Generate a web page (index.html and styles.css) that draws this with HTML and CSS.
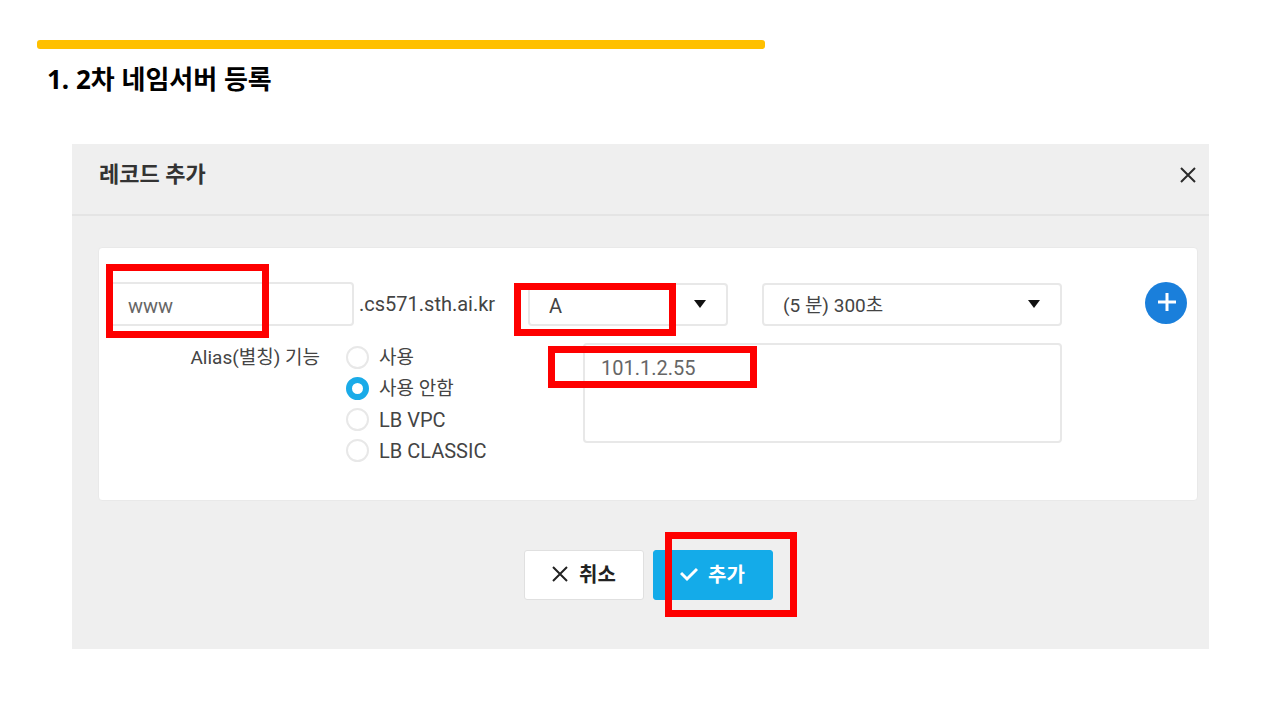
FILE: index.html
```html
<!DOCTYPE html>
<html lang="ko">
<head>
  <meta charset="UTF-8">
  <title>2차 네임서버 등록</title>
  <meta name="viewport" content="width=device-width, initial-scale=1.0">
  <link rel="stylesheet" href="styles.css">
</head>
<body>
  <div class="bar"></div>
  <h1>1. 2차 네임서버 등록</h1>

  <form class="panel">
    <header class="panel-header">
      <h2>레코드 추가</h2>
      <button class="close" type="button" aria-label="닫기">
        <svg width="18" height="18" viewBox="0 0 18 18"><path d="M2 2L16 16M16 2L2 16" fill="none" stroke="#2b2b2b" stroke-width="2"/></svg>
      </button>
    </header>

    <div class="card">
      <div class="left">
        <div class="host">
          <input class="field" type="text" value="www" aria-label="레코드명">
          <span>.cs571.sth.ai.kr</span>
          <div class="mark mark-host"></div>
        </div>
        <fieldset class="alias">
          <legend class="hidden">Alias</legend>
          <span class="alias-title">Alias(별칭) 기능</span>
          <div class="options">
            <label class="ko"><input type="radio" name="alias">사용</label>
            <label class="ko"><input type="radio" name="alias" checked>사용 안함</label>
            <label><input type="radio" name="alias">LB VPC</label>
            <label><input type="radio" name="alias">LB CLASSIC</label>
          </div>
        </fieldset>
      </div>

      <div class="right">
        <div class="selects">
          <div class="select type">
            <select class="field" aria-label="타입"><option>A</option></select>
            <svg class="arrow" width="12" height="8" viewBox="0 0 12 8"><path d="M0 0H12L6 8Z" fill="#111"/></svg>
            <div class="mark mark-type"></div>
          </div>
          <div class="select ttl">
            <select class="field ko" aria-label="TTL"><option>(5 분) 300초</option></select>
            <svg class="arrow" width="12" height="8" viewBox="0 0 12 8"><path d="M0 0H12L6 8Z" fill="#111"/></svg>
          </div>
        </div>
        <div class="value">
          <textarea class="field" aria-label="레코드 값">101.1.2.55</textarea>
          <div class="mark mark-value"></div>
        </div>
      </div>

      <button class="plus" type="button" aria-label="추가">
        <svg width="20" height="20" viewBox="0 0 20 20"><path d="M11 0V18M2 9H20" fill="none" stroke="#fff" stroke-width="3"/></svg>
      </button>
    </div>

    <div class="buttons">
      <button class="button" type="button">
        <svg width="18" height="18" viewBox="0 0 18 18"><path d="M2 2L16 16M16 2L2 16" fill="none" stroke="#222" stroke-width="2"/></svg>
        취소
      </button>
      <div class="add">
        <button class="button primary" type="submit">
          <svg width="18" height="18" viewBox="0 0 18 18"><path d="M1 8L7 14L17 4" fill="none" stroke="#fff" stroke-width="3"/></svg>
          추가
        </button>
        <div class="mark mark-add"></div>
      </div>
    </div>
  </form>
</body>
</html>
```

FILE: styles.css
```css
* {
  box-sizing: border-box;
}

body {
  margin: 0;
  padding: 40px 71px 40px 72px;
  background: white;
  color: #444;
  font-family: Roboto, "Noto Sans CJK KR", sans-serif;
  font-size: 20px;
  line-height: 24px;
}

h1, h2 {
  margin: 0;
  font-weight: bold;
}

.bar {
  width: 64%;
  height: 9px;
  margin-left: -35px;
  border-radius: 3px;
  background: #ffc000;
}

h1 {
  margin: 14px 0 0 -25px;
  color: black;
  font-family: "Noto Sans", "Noto Sans CJK KR", sans-serif;
  font-size: 26px;
  line-height: 32px;
}

button {
  border: none;
  cursor: pointer;
  font-family: inherit;
}

.panel {
  margin-top: 49px;
  padding-bottom: 49px;
  background: #efefef;
}

.panel-header {
  display: flex;
  justify-content: space-between;
  align-items: center;
  height: 72px;
  padding: 0 12px 9px 27px;
  border-bottom: 2px solid #e4e4e4;
}

h2 {
  color: #333;
  font-size: 22px;
}

.close {
  display: flex;
  padding: 0;
  background: none;
}

.card {
  display: flex;
  min-height: 254px;
  margin: 31px 11px 0 26px;
  padding: 34px 10px 34px 9px;
  border: 1px solid #e9e9e9;
  border-radius: 4px;
  background: white;
}

.field {
  display: block;
  width: 100%;
  height: 43px;
  border: 2px solid #e8e8e8;
  border-radius: 4px;
  background: white;
  color: #444;
  font-family: inherit;
  font-size: 20px;
  line-height: 24px;
  outline: none;
}

.left {
  flex: none;
  width: 420px;
}

.host {
  display: flex;
  align-items: center;
  gap: 5px;
  position: relative;
}

.host .field {
  width: 246px;
  height: 44px;
  padding: 4px 18px 0;
  color: #666;
}

.alias {
  display: flex;
  margin: 16px 0 0;
  padding: 0;
  border: none;
}

.hidden {
  display: none;
}

.alias-title {
  width: 212px;
  margin-right: 26px;
  line-height: 31px;
  text-align: right;
  font-size: 19px;
}

.options label {
  display: flex;
  align-items: center;
  height: 31px;
}

.options input {
  appearance: none;
  width: 23px;
  height: 23px;
  margin: 0 10px 0 0;
  border: 2px solid #e8e8e8;
  border-radius: 50%;
  background: white;
}

.options input:checked {
  border: 6px solid #1aabe8;
}

.ko {
  font-size: 19px;
}

.right {
  flex: 1;
  max-width: 534px;
}

.selects {
  display: flex;
  gap: 34px;
  padding-top: 1px;
}

.select {
  position: relative;
}

.type {
  flex: 2;
}

.ttl {
  flex: 3;
}

select.field {
  appearance: none;
  padding: 2px 19px 0;
}

select.ko {
  font-size: 19px;
}

.arrow {
  position: absolute;
  top: 17px;
  right: 22px;
  pointer-events: none;
}

.value {
  position: relative;
  margin: 17px 0 0 55px;
}

textarea.field {
  height: 100px;
  padding: 11px 16px;
  color: #666;
  resize: none;
}

.plus {
  display: flex;
  justify-content: center;
  align-items: center;
  width: 42px;
  height: 42px;
  margin-left: auto;
  border-radius: 50%;
  background: #1a7fdb;
}

.buttons {
  display: flex;
  justify-content: center;
  gap: 9px;
  margin-top: 49px;
  padding-left: 15px;
}

.button {
  display: flex;
  justify-content: center;
  align-items: center;
  gap: 10px;
  width: 120px;
  height: 50px;
  padding-bottom: 4px;
  border: 1px solid #e0e0e0;
  border-radius: 3px;
  background: white;
  color: #222;
  font-size: 20px;
  font-weight: bold;
}

.primary {
  border-color: #14abe9;
  background: #14abe9;
  color: white;
}

.add {
  position: relative;
}

/* red callouts over the form */
.mark {
  position: absolute;
  border: 7px solid #fe0000;
  pointer-events: none;
}

.mark-host {
  top: -18px;
  left: -2px;
  width: 163px;
  height: 74px;
}

.mark-type {
  top: 0;
  left: -14px;
  width: 162px;
  height: 53px;
}

.mark-value {
  top: 3px;
  left: -35px;
  width: 209px;
  height: 42px;
}

.mark-add {
  top: -18px;
  left: 12px;
  width: 132px;
  height: 85px;
}
```
